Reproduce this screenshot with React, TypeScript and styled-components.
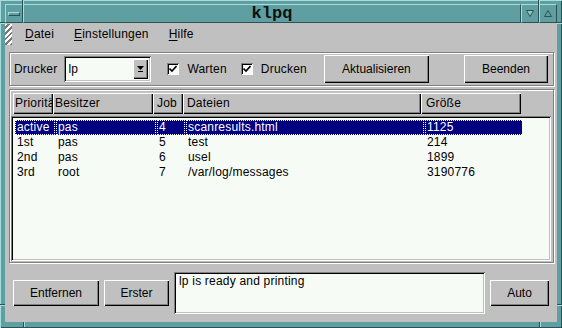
import React from "react";
import styled, { createGlobalStyle } from "styled-components";

const TEAL = "#5f9fa1";
const TEAL_LIGHT = "#a6dcdc";
const TEAL_DARK = "#2c5253";
const GRAY = "#c0c0c0";
const FIELD = "#f6fbf6";
const NAVY = "#000080";

const Global = createGlobalStyle`
  html, body { margin: 0; padding: 0; background: ${GRAY}; }
  body {
    font-family: "Liberation Sans", Arial, Helvetica, sans-serif;
    font-size: 12px;
    letter-spacing: 0.2px;
    color: #000;
  }
  #root { width: 562px; height: 328px; overflow: hidden; }
`;

const Window = styled.div`
  position: relative;
  box-sizing: border-box;
  width: 562px;
  height: 328px;
  background: ${TEAL};
  box-shadow: inset 1px 1px ${TEAL_LIGHT}, inset -1px -1px ${TEAL_DARK};
  padding: 4px 5px 6px 5px;
  display: flex;
  flex-direction: column;
`;

const Tick = styled.div<{ $v?: boolean }>`
  position: absolute;
  width: ${(p) => (p.$v ? "1px" : "5px")};
  height: ${(p) => (p.$v ? "5px" : "1px")};
  background: ${TEAL_DARK};
  box-shadow: ${(p) => (p.$v ? `1px 0 ${TEAL_LIGHT}` : `0 1px ${TEAL_LIGHT}`)};
`;

const TitleBar = styled.div`
  display: flex;
  height: 19px;
  flex: none;
`;

const TitleSeg = styled.div<{ $w?: number }>`
  box-sizing: border-box;
  height: 100%;
  width: ${(p) => (p.$w ? `${p.$w}px` : "auto")};
  flex: ${(p) => (p.$w ? "none" : "1")};
  border-top: 1px solid ${TEAL_LIGHT};
  border-left: 1px solid ${TEAL_LIGHT};
  border-right: 1px solid ${TEAL_DARK};
  border-bottom: 1px solid ${TEAL_DARK};
  display: flex;
  align-items: center;
  justify-content: center;
`;

const Title = styled.span`
  font-family: "Liberation Mono", "DejaVu Sans Mono", monospace;
  font-weight: bold;
  font-size: 17px;
  letter-spacing: 0;
  color: #111;
  margin-top: -1px;
`;

const Dash = styled.div`
  width: 12px;
  height: 4px;
  box-sizing: border-box;
  border-top: 1px solid ${TEAL_LIGHT};
  border-left: 1px solid ${TEAL_LIGHT};
  border-right: 1px solid ${TEAL_DARK};
  border-bottom: 1px solid ${TEAL_DARK};
`;

const Content = styled.div`
  flex: 1;
  background: ${GRAY};
  display: flex;
  flex-direction: column;
  min-height: 0;
`;

const MenuBar = styled.div`
  display: flex;
  align-items: center;
  height: 22px;
  flex: none;
`;

const Handle = styled.div`
  width: 7px;
  height: 21px;
  margin-top: 1px;
  align-self: flex-start;
  background: repeating-linear-gradient(
    135deg,
    #ffffff 0px,
    #ffffff 2px,
    #7a7a7a 2px,
    #7a7a7a 4px
  );
  margin-right: 3px;
`;

const MenuItem = styled.span`
  padding: 0 10px;
  line-height: 22px;
  u { text-decoration: underline; text-underline-offset: 2px; }
`;

const GroupBox = styled.div`
  box-sizing: border-box;
  margin: 7px 3px 0 4px;
  height: 34px;
  border: 1px solid #808080;
  box-shadow: inset 1px 1px #fff, 1px 1px #fff;
  display: flex;
  align-items: center;
  padding: 0 5px 0 4px;
  flex: none;
`;

const Label = styled.span`
  white-space: nowrap;
`;

const Combo = styled.div`
  box-sizing: border-box;
  width: 87px;
  height: 26px;
  margin-left: 7px;
  background: ${FIELD};
  box-shadow: inset 1px 1px #808080, inset -1px -1px #fff, inset 2px 2px #000,
    inset -2px -2px ${GRAY};
  display: flex;
  align-items: center;
  padding: 3px 3px 3px 4px;
`;

const ComboText = styled.span`
  flex: 1;
`;

const ArrowBtn = styled.div`
  box-sizing: border-box;
  width: 15px;
  height: 20px;
  background: ${GRAY};
  box-shadow: inset 1px 1px #fff, inset -1px -1px #000, inset -2px -2px #808080;
  display: flex;
  align-items: center;
  justify-content: center;
`;

const Check = styled.div<{ $ml: number }>`
  box-sizing: border-box;
  width: 12px;
  height: 12px;
  margin-left: ${(p) => p.$ml}px;
  margin-right: 8px;
  background: ${FIELD};
  box-shadow: inset 1px 1px #808080, inset -1px -1px #fff, inset 2px 2px #000;
  display: flex;
  align-items: center;
  justify-content: center;
`;

const Button = styled.button<{ $w: number; $h?: number; $ml?: string }>`
  box-sizing: border-box;
  width: ${(p) => p.$w}px;
  height: ${(p) => p.$h ?? 26}px;
  margin: 0;
  margin-left: ${(p) => p.$ml ?? "0"};
  padding: 0;
  border: none;
  background: ${GRAY};
  font: inherit;
  color: #000;
  box-shadow: inset 1px 1px #fff, inset -1px -1px #000, inset -2px -2px #808080;
  flex: none;
`;

const Panel = styled.div`
  box-sizing: border-box;
  margin: 3px 3px 0 4px;
  height: 174px;
  border: 1px solid #808080;
  box-shadow: inset 1px 1px #fff, 1px 1px #fff;
  padding: 3px 2px 1px 1px;
  display: flex;
  flex-direction: column;
  flex: none;
`;

const HeaderRow = styled.div`
  display: flex;
  height: 21px;
  margin-left: 2px;
  flex: none;
`;

const HeaderCell = styled.div<{ $w: number; $pl: number }>`
  box-sizing: border-box;
  width: ${(p) => p.$w}px;
  height: 21px;
  padding-left: ${(p) => p.$pl}px;
  line-height: 20px;
  white-space: nowrap;
  overflow: hidden;
  box-shadow: inset 1px 1px #fff, inset -1px -1px #000, inset -2px -2px #808080;
  flex: none;
`;

const Body = styled.div`
  margin-top: 2px;
  flex: 1;
  background: ${FIELD};
  box-shadow: inset 1px 1px #808080, inset -1px -1px #fff, inset 2px 2px #000,
    inset -2px -2px ${GRAY};
  padding: 4px 2px 2px 4px;
`;

const Row = styled.div<{ $sel?: boolean }>`
  display: flex;
  height: 15px;
  background: ${(p) => (p.$sel ? NAVY : "transparent")};
  color: ${(p) => (p.$sel ? "#fff" : "#000")};
  width: 507px;
`;

const Cell = styled.div<{ $w: number; $sel?: boolean }>`
  box-sizing: border-box;
  width: ${(p) => p.$w}px;
  line-height: 14px;
  padding-left: 2px;
  white-space: nowrap;
  overflow: hidden;
  outline: ${(p) => (p.$sel ? "1px dotted #fff" : "none")};
  outline-offset: -1px;
  margin-right: 1px;
  flex: none;
`;

const BottomRow = styled.div`
  flex: 1;
  display: flex;
  align-items: center;
  gap: 5px;
  padding: 0 8px;
`;

const Status = styled.div`
  box-sizing: border-box;
  width: 314px;
  height: 42px;
  background: ${FIELD};
  box-shadow: inset 1px 1px #808080, inset -1px -1px #fff, inset 2px 2px #000,
    inset -2px -2px ${GRAY};
  padding: 2px 5px;
  line-height: 15px;
`;

const COLS = [40, 100, 30, 238, 100];
const CELL_W = [40, 100, 28, 238, 99];

const headers: [string, number][] = [
  ["Priorität", 2],
  ["Besitzer", 2],
  ["Job", 4],
  ["Dateien", 4],
  ["Größe", 5],
];

const rows = [
  ["active", "pas", "4", "scanresults.html", "1125"],
  ["1st", "pas", "5", "test", "214"],
  ["2nd", "pas", "6", "usel", "1899"],
  ["3rd", "root", "7", "/var/log/messages", "3190776"],
];

const CheckMark = () => (
  <svg width="8" height="8" viewBox="0 0 8 8">
    <path d="M0.5 3.5 L3 6 L7.5 1" stroke="#000" strokeWidth="1.6" fill="none" />
  </svg>
);

export default function App() {
  return (
    <>
      <Global />
      <Window>
        <Tick $v style={{ left: 22, top: 0 }} />
        <Tick $v style={{ left: 538, top: 0 }} />
        <Tick style={{ left: 0, top: 22 }} />
        <Tick style={{ left: 557, top: 22 }} />
        <Tick style={{ left: 0, top: 304 }} />
        <Tick style={{ left: 557, top: 304 }} />
        <Tick $v style={{ left: 23, top: 322 }} />
        <Tick $v style={{ left: 539, top: 322 }} />
        <TitleBar>
          <TitleSeg $w={18}>
            <Dash />
          </TitleSeg>
          <TitleSeg>
            <Title>klpq</Title>
          </TitleSeg>
          <TitleSeg $w={18}>
            <svg width="8" height="7" viewBox="0 0 8 7">
              <path d="M0.5 0.5 H7.5 L4 6.5 Z" fill="#8ccaca" stroke={TEAL_DARK} strokeWidth="1" />
            </svg>
          </TitleSeg>
          <TitleSeg $w={18}>
            <svg width="8" height="7" viewBox="0 0 8 7">
              <path d="M4 0.5 L7.5 6.5 H0.5 Z" fill={TEAL} stroke={TEAL_DARK} strokeWidth="1" />
            </svg>
          </TitleSeg>
        </TitleBar>
        <Content>
          <MenuBar>
            <Handle />
            <MenuItem>
              <u>D</u>atei
            </MenuItem>
            <MenuItem>
              <u>E</u>instellungen
            </MenuItem>
            <MenuItem>
              <u>H</u>ilfe
            </MenuItem>
          </MenuBar>
          <GroupBox>
            <Label>Drucker</Label>
            <Combo>
              <ComboText>lp</ComboText>
              <ArrowBtn>
                <svg width="7" height="6" viewBox="0 0 7 6">
                  <path d="M0 0 H7 L3.5 4 Z" fill="#000" />
                  <rect x="1" y="5" width="5" height="1" fill="#000" />
                </svg>
              </ArrowBtn>
            </Combo>
            <Check $ml={16}>
              <CheckMark />
            </Check>
            <Label>Warten</Label>
            <Check $ml={14}>
              <CheckMark />
            </Check>
            <Label>Drucken</Label>
            <Button $w={105} $h={28} $ml="17px">
              Aktualisieren
            </Button>
            <Button $w={84} $h={28} $ml="auto">
              Beenden
            </Button>
          </GroupBox>
          <Panel>
            <HeaderRow>
              {headers.map(([h, pl], i) => (
                <HeaderCell key={h} $w={COLS[i]} $pl={pl}>
                  {h}
                </HeaderCell>
              ))}
            </HeaderRow>
            <Body>
              {rows.map((r, ri) => (
                <Row key={ri} $sel={ri === 0}>
                  {r.map((c, ci) => (
                    <Cell key={ci} $w={CELL_W[ci]} $sel={ri === 0}>
                      {c}
                    </Cell>
                  ))}
                </Row>
              ))}
            </Body>
          </Panel>
          <BottomRow>
            <Button $w={86}>Entfernen</Button>
            <Button $w={65}>Erster</Button>
            <Status>lp is ready and printing</Status>
            <Button $w={59}>Auto</Button>
          </BottomRow>
        </Content>
      </Window>
    </>
  );
}
